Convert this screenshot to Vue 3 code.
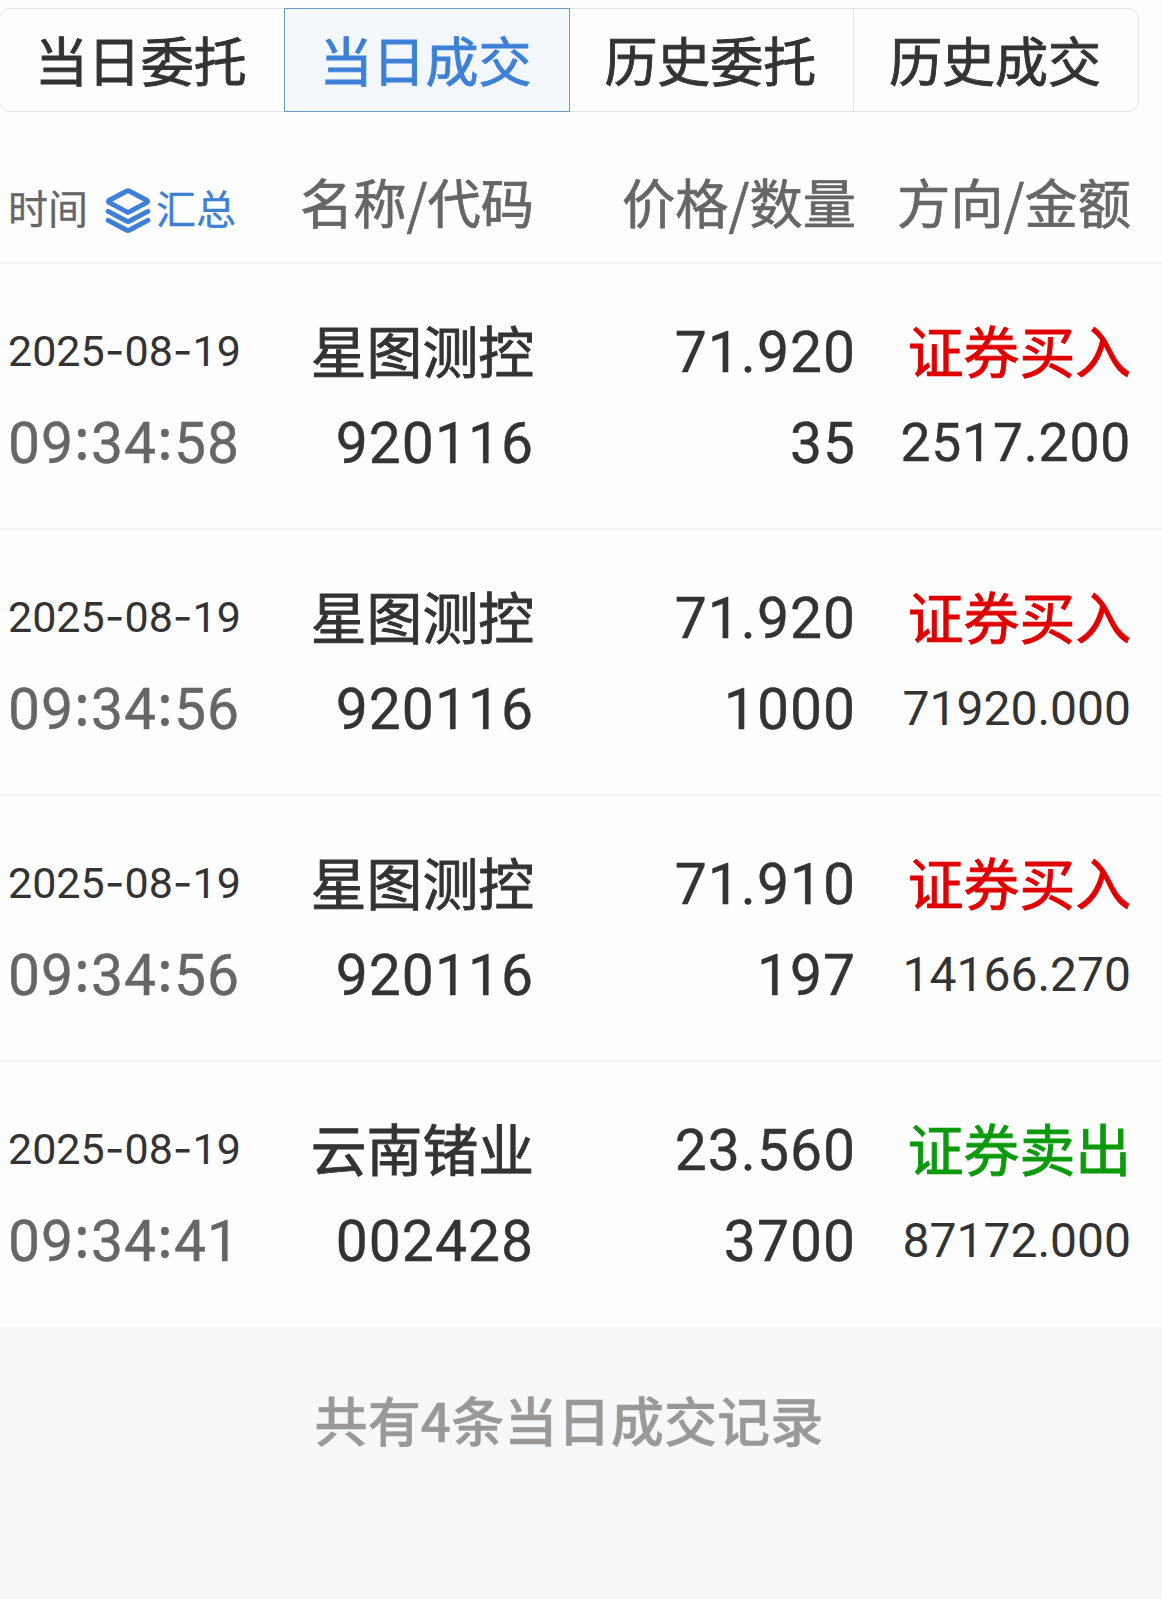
<template>
  <div class="page">
    <!-- 頂部 Tabs -->
    <div class="tabs">
      <button
        v-for="tab in tabs"
        :key="tab.key"
        class="tab"
        :class="{ active: currentTab === tab.key }"
        @click="currentTab = tab.key"
      >{{ tab.text }}</button>
    </div>

    <!-- 表頭 -->
    <div class="grid head">
      <div class="head-time">
        <span>时间</span>
        <span class="summary" @click="summary = !summary">
          <svg class="layers" viewBox="0 0 46 48" fill="none" stroke="currentColor" stroke-width="5" stroke-linejoin="round" stroke-linecap="round">
            <path d="M21.4 4.2Q23 3.2 24.6 4.2L41.6 13.2Q43.6 14.4 41.6 15.6L24.6 24.6Q23 25.6 21.4 24.6L4.4 15.6Q2.4 14.4 4.4 13.2z" />
            <path d="M3.2 24.4 21.4 34Q23 35 24.6 34L42.8 24.4" />
            <path d="M3.2 33.4 21.4 43Q23 44 24.6 43L42.8 33.4" />
          </svg>
          <span>汇总</span>
        </span>
      </div>
      <div class="cell">名称/代码</div>
      <div class="cell">价格/数量</div>
      <div class="cell">方向/金额</div>
    </div>

    <!-- 成交列表 -->
    <div v-for="deal in deals" :key="deal.id" class="grid row">
      <div class="cell left">
        <div class="line date"><span v-for="(c, i) in deal.date" :key="i" :class="{ dash: c === '-' }">{{ c }}</span></div>
        <div class="line time"><span v-for="(c, i) in deal.time" :key="i" :class="{ colon: c === ':' }">{{ c }}</span></div>
      </div>
      <div class="cell">
        <div class="line name">{{ deal.name }}</div>
        <div class="line">{{ deal.code }}</div>
      </div>
      <div class="cell">
        <div class="line">{{ deal.price }}</div>
        <div class="line">{{ deal.count }}</div>
      </div>
      <div class="cell">
        <div class="line name" :class="deal.side">{{ deal.side === 'buy' ? '证券买入' : '证券卖出' }}</div>
        <div class="line" :class="deal.amount.length > 8 ? 'small' : 'medium'">{{ deal.amount }}</div>
      </div>
    </div>

    <div class="footer">共有{{ deals.length }}条当日成交记录</div>
  </div>
</template>

<script setup>
import { ref } from 'vue'

const tabs = [
  { key: 'todayOrder', text: '当日委托' },
  { key: 'todayDeal', text: '当日成交' },
  { key: 'historyOrder', text: '历史委托' },
  { key: 'historyDeal', text: '历史成交' },
]
const currentTab = ref('todayDeal')
const summary = ref(false)

const deals = ref([
  { id: 1, date: '2025-08-19', time: '09:34:58', name: '星图测控', code: '920116', price: '71.920', count: '35', side: 'buy', amount: '2517.200' },
  { id: 2, date: '2025-08-19', time: '09:34:56', name: '星图测控', code: '920116', price: '71.920', count: '1000', side: 'buy', amount: '71920.000' },
  { id: 3, date: '2025-08-19', time: '09:34:56', name: '星图测控', code: '920116', price: '71.910', count: '197', side: 'buy', amount: '14166.270' },
  { id: 4, date: '2025-08-19', time: '09:34:41', name: '云南锗业', code: '002428', price: '23.560', count: '3700', side: 'sell', amount: '87172.000' },
])
</script>

<style>
body {
  background: #f7f8fa;
}
</style>

<style scoped>
.page {
  min-height: 1599px;
  background: #f7f8fa;
  color: #333;
  font-family: Roboto, "Noto Sans CJK SC", sans-serif;
}
.tabs {
  display: flex;
  box-sizing: border-box;
  height: 142px;
  padding: 8px 23px 29px 0;
  background: #fefefe;
  border-bottom: 1px solid #f8f8f8;
}
.tab {
  flex: 1;
  box-sizing: border-box;
  margin: 0 0 0 -1px;
  padding: 0 2px 2px 0;
  border: 1px solid #dfe1e2;
  background: #fefefe;
  color: #333;
  font-family: "Noto Sans CJK SC", sans-serif;
  font-size: 53px;
  line-height: 70px;
  -webkit-text-stroke: 0.9px currentColor;
  cursor: pointer;
}
.tab:first-child {
  border-radius: 11px 0 0 11px;
}
.tab:last-child {
  border-radius: 0 11px 11px 0;
}
.tab.active {
  z-index: 1;
  border-color: #6c9cc0;
  background: #f4f8fd;
  color: #3d80d6;
}
.grid {
  display: grid;
  grid-template-columns: 262px 264px 322px 275px;
  box-sizing: border-box;
  padding-left: 8px;
  background: #fefefe;
  border-bottom: 2px solid #f4f4f4;
}
.cell {
  text-align: right;
  white-space: nowrap;
}
.cell.left {
  text-align: left;
}
.head {
  height: 122px;
  color: #666;
  font-family: "Noto Sans CJK SC", sans-serif;
  font-size: 53.3px;
  line-height: 118px;
  -webkit-text-stroke: 0.7px currentColor;
}
.head-time {
  display: flex;
  align-items: center;
  padding-top: 11px;
  font-size: 40px;
  line-height: 107px;
  -webkit-text-stroke: 0.3px currentColor;
}
.summary {
  display: flex;
  align-items: center;
  margin-left: 17px;
  color: #3d80d6;
  cursor: pointer;
}
.layers {
  width: 46px;
  height: 48px;
  margin: 6px 5px 0 0;
}
.row {
  height: 266px;
  padding-top: 43px;
}
.row:nth-last-child(2) {
  height: 265px;
  border-bottom-color: #fefefe;
}
.line {
  height: 91px;
  font-size: 57px;
  line-height: 91px;
  letter-spacing: 1px;
  -webkit-text-stroke: 0.4px currentColor;
}
.name {
  font-family: "Noto Sans CJK SC", sans-serif;
  font-size: 55.8px;
  line-height: 84px;
  letter-spacing: 0;
  -webkit-text-stroke: 0.9px currentColor;
}
.date {
  font-size: 43px;
  line-height: 87px;
  letter-spacing: 0;
  -webkit-text-stroke: 0;
}
.dash {
  font-family: Inter, sans-serif;
}
.time {
  color: #666;
}
.colon {
  font-family: "Noto Sans CJK SC", sans-serif;
  line-height: 0;
  vertical-align: 4px;
}
.medium {
  font-size: 53.4px;
  line-height: 90px;
  letter-spacing: 0.8px;
}
.small {
  font-size: 48px;
  line-height: 89px;
  letter-spacing: 0;
  -webkit-text-stroke: 0;
}
.buy {
  color: #e00000;
}
.sell {
  color: #0c9a0c;
}
.footer {
  padding: 53px 24px 0 0;
  color: #999;
  font-family: "Noto Sans CJK SC", sans-serif;
  font-size: 53.2px;
  font-weight: 500;
  line-height: 78px;
  text-align: center;
  -webkit-text-stroke: 0.4px currentColor;
}
</style>
